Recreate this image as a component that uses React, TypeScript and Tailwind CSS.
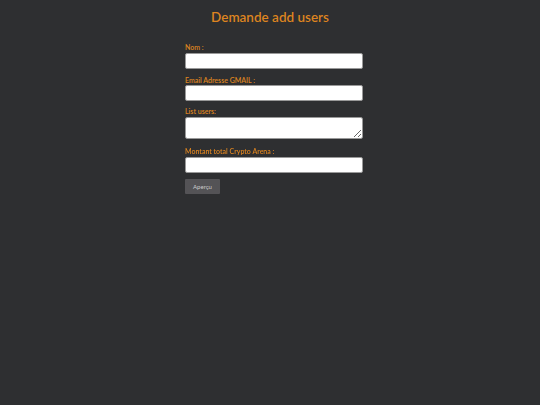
import React from "react";

export default function App() {
  const font = { fontFamily: "Lato, 'Noto Sans', sans-serif" };
  return (
    <div className="min-h-[405px] w-full bg-[#2e2f31]" style={font}>
      <div className="flex flex-col items-center pt-[8px]">
        <h1 className="text-[13.5px] leading-[18px] font-semibold text-[#dd8420]">Demande add users</h1>
      </div>
      <div className="flex justify-center pl-[8px]">
        <form className="mt-[17px] flex w-[178px] flex-col">
          <label className="text-[7px] leading-[9px] font-semibold text-[#dd8420]">Nom :</label>
          <input className="mt-[1px] h-[16px] w-full rounded-[2px] border border-[#999] bg-white" />
          <label className="mt-[7px] text-[7px] leading-[9px] font-semibold text-[#dd8420]">Email Adresse GMAIL :</label>
          <input className="mt-0 h-[16px] w-full rounded-[2px] border border-[#999] bg-white" />
          <label className="mt-[6px] text-[7px] leading-[9px] font-semibold text-[#dd8420]">List users:</label>
          <textarea className="mt-[1px] h-[22px] w-full resize-y rounded-[2px] border border-[#999] bg-white" />
          <label className="mt-[8px] text-[7px] leading-[9px] font-semibold text-[#dd8420]">Montant total Crypto Arena :</label>
          <input className="mt-[1px] h-[16px] w-full rounded-[2px] border border-[#999] bg-white" />
          <button type="button" className="mt-[6px] h-[15px] w-[35px] rounded-[1px] bg-[#545356] text-[6px] text-[#ccc]">Aperçu</button>
        </form>
      </div>
    </div>
  );
}
